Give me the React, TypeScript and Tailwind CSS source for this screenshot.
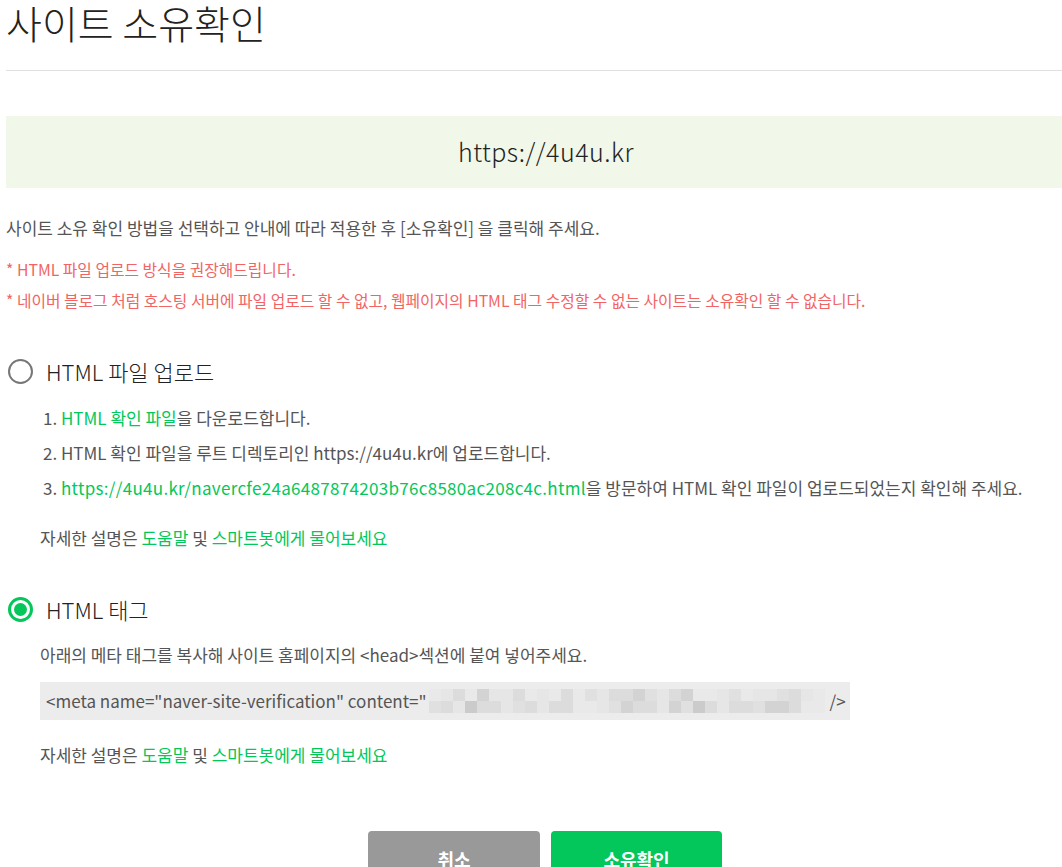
import React from 'react';

const FONT = "font-['Noto_Sans_CJK_KR','Noto_Sans',sans-serif]";

// blurred verification key (mosaic), two rows of blocks
const TILE = ['bg-[#e6e6e6]', 'bg-[#dcdcdc]', 'bg-[#d3d3d3]', 'bg-[#e9e9e9]', 'bg-[#cbcbcb]', 'bg-[#e0e0e0]'];
const ROW1 = [3, 0, 1, 3, 2, 0, 0, 1, 3, 0, 3, 1, 3, 5, 0, 1, 1, 2, 5, 0, 1, 2, 3, 3, 0, 5, 3, 0, 0, 5, 1, 0, 3];
const ROW2 = [5, 1, 0, 4, 1, 1, 0, 5, 1, 0, 1, 1, 3, 3, 0, 5, 2, 1, 1, 0, 2, 5, 4, 1, 0, 1, 1, 5, 2, 2, 1, 3, 3];

const Radio = ({ checked }: { checked?: boolean }) =>
  checked ? (
    <span className="w-[25px] h-[25px] rounded-full border-[3px] border-[#03c75a] flex items-center justify-center">
      <span className="w-[13px] h-[13px] rounded-full bg-[#03c75a]" />
    </span>
  ) : (
    <span className="w-[25px] h-[25px] rounded-full border-2 border-[#777]" />
  );

const Help = ({ className }: { className: string }) => (
  <p className={`${className} pl-[34px] text-[17px] leading-[24px] text-[#555]`}>
    자세한 설명은 <span className="text-[#03c75a]">도움말</span> 및{' '}
    <span className="text-[#03c75a]">스마트봇에게 물어보세요</span>
  </p>
);

export default function App() {
  return (
    <div className={`min-h-screen bg-white pl-[6px] ${FONT} overflow-hidden`}>
      <h1 className="text-[39px] leading-[44px] font-light text-[#222]">사이트 소유확인</h1>
      <div className="mt-[26px] h-px bg-[#e0e0e0]" />

      <div className="mt-[45px] h-[72px] bg-[#f1f7e9] flex items-center justify-center pl-[24px] text-[25px] font-light tracking-[0.5px] text-[#222]">
        https://4u4u.kr
      </div>

      <p className="mt-[28px] text-[17px] leading-[24px] text-[#555]">
        사이트 소유 확인 방법을 선택하고 안내에 따라 적용한 후 [소유확인] 을 클릭해 주세요.
      </p>
      <p className="mt-[18px] text-[15.8px] leading-[24px] text-[#f26464]">* HTML 파일 업로드 방식을 권장해드립니다.</p>
      <p className="mt-[7px] text-[15.8px] leading-[24px] text-[#f26464]">
        * 네이버 블로그 처럼 호스팅 서버에 파일 업로드 할 수 없고, 웹페이지의 HTML 태그 수정할 수 없는 사이트는 소유확인 할 수 없습니다.
      </p>

      {/* HTML 파일 업로드 */}
      <label className="mt-[43px] h-[30px] flex items-center gap-[13px] pl-[2px]">
        <Radio />
        <span className="text-[22px] font-light text-[#222]">HTML 파일 업로드</span>
      </label>
      <ol className="mt-[14px] pl-[37px] text-[17px] leading-[35px] text-[#555]">
        <li>
          1. <span className="text-[#03c75a]">HTML 확인 파일</span>을 다운로드합니다.
        </li>
        <li>2. HTML 확인 파일을 루트 디렉토리인 https://4u4u.kr에 업로드합니다.</li>
        <li>
          3.{' '}
          <span className="text-[#03c75a] tracking-[0.3px]">
            https://4u4u.kr/navercfe24a6487874203b76c8580ac208c4c.html
          </span>
          을 방문하여 HTML 확인 파일이 업로드되었는지 확인해 주세요.
        </li>
      </ol>
      <Help className="mt-[21px]" />

      {/* HTML 태그 */}
      <label className="mt-[44px] h-[30px] flex items-center gap-[13px] pl-[2px]">
        <Radio checked />
        <span className="text-[22px] font-light text-[#222]">HTML 태그</span>
      </label>
      <p className="mt-[19px] pl-[34px] text-[17px] leading-[24px] text-[#555]">
        아래의 메타 태그를 복사해 사이트 홈페이지의 &lt;head&gt;섹션에 붙여 넣어주세요.
      </p>
      <div className="mt-[15px] ml-[34px] w-[810px] h-[38px] bg-[#ececec] flex items-center pl-[6px] text-[17px] text-[#555]">
        <span className="whitespace-nowrap">&lt;meta name="naver-site-verification" content="</span>
        <div className="ml-[2px] flex flex-col">
          <div className="flex">
            {ROW1.map((c, i) => (
              <span key={i} className={`w-[12px] h-[12px] ${TILE[c]}`} />
            ))}
          </div>
          <div className="flex">
            {ROW2.map((c, i) => (
              <span key={i} className={`w-[12px] h-[12px] ${TILE[c]}`} />
            ))}
          </div>
        </div>
        <span className="ml-[5px]">/&gt;</span>
      </div>
      <Help className="mt-[23px]" />

      <div className="mt-[64px] flex justify-center gap-[11px] pl-[22px]">
        <button className="w-[172px] h-[56px] rounded-[4px] bg-[#999] text-white text-[18px] font-bold">취소</button>
        <button className="w-[171px] h-[56px] rounded-[4px] bg-[#03c75a] text-white text-[18px] font-bold">소유확인</button>
      </div>
    </div>
  );
}
